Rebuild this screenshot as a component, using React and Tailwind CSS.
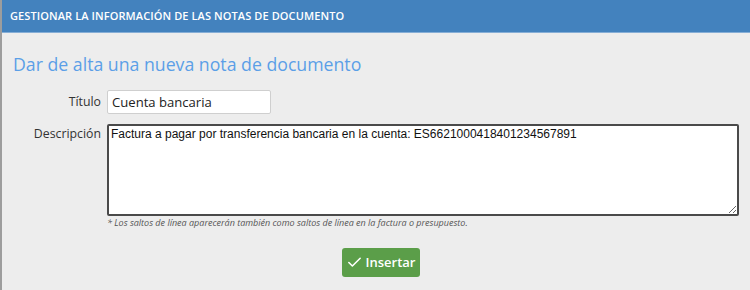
import { Check } from 'lucide-react'

export default function App() {
  return (
    <div className="w-[750px] h-[290px] overflow-hidden bg-[#ededed] border-l-2 border-[#9d9d9d] font-['Open_Sans',sans-serif]">
      {/* Header bar */}
      <div className="h-[33px] bg-[#4382be] border-b border-[#86aed6] pl-[8px] flex items-center">
        <span className="text-[11px] font-semibold text-white tracking-[0.1px]">
          GESTIONAR LA INFORMACIÓN DE LAS NOTAS DE DOCUMENTO
        </span>
      </div>

      <div className="pl-[11px] pr-[9px]">
        <h1 className="mt-[20px] h-[23px] text-[17.7px] leading-[23px] text-[#5b9fe7]">
          Dar de alta una nueva nota de documento
        </h1>

        <div className="mt-[14px] flex items-center">
          <label className="w-[94px] pr-[6px] text-right text-[12.3px] text-[#333]">Título</label>
          <input
            type="text"
            defaultValue="Cuenta bancaria"
            className="w-[164px] h-[24px] bg-white border border-[#cfcfcf] rounded-[2px] px-[4px] text-[13.1px] text-[#222] font-['Open_Sans',sans-serif] outline-none"
          />
        </div>

        <div className="mt-[10px] flex items-start">
          <label className="w-[94px] pr-[6px] pt-[1px] text-right text-[12.3px] text-[#333]">Descripción</label>
          <div className="flex flex-col">
            <textarea
              defaultValue="Factura a pagar por transferencia bancaria en la cuenta: ES6621000418401234567891"
              className="w-[632px] h-[92px] bg-white border-2 border-[#4a4a4a] rounded-[2px] px-[2px] py-0 text-[12px] leading-[17px] text-[#111] font-['Liberation_Sans',Arial,sans-serif] outline-none"
            />
            <p className="mt-[1px] text-[9px] italic text-[#555] leading-[12px]">
              * Los saltos de línea aparecerán también como saltos de línea en la factura o presupuesto.
            </p>
          </div>
        </div>

        <div className="mt-[19px] flex justify-center">
          <button className="ml-[7px] h-[29px] w-[78px] bg-[#5b9e49] rounded-[3px] flex items-center justify-center gap-[3px] text-white text-[13px] font-semibold">
            <Check size={17} strokeWidth={2.2} />
            <span>Insertar</span>
          </button>
        </div>
      </div>
    </div>
  )
}
